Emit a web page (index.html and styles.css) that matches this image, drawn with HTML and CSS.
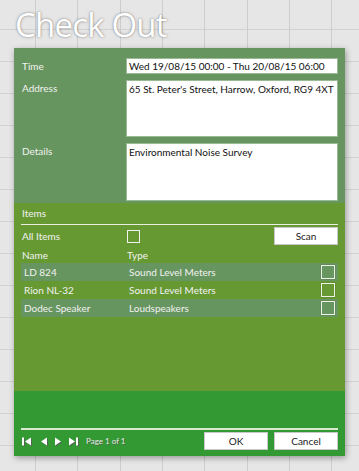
FILE: index.html
```html
<!DOCTYPE html>
<html>
<head>
<meta charset="utf-8">
<link rel="stylesheet" href="styles.css">
</head>
<body>
<div class="page">
  <h1 class="title">Check Out</h1>
  <div class="dialog">
    <div class="form">
      <div class="frow">
        <label class="flabel">Time</label>
        <div class="field single">Wed 19/08/15 00:00 - Thu 20/08/15 06:00</div>
      </div>
      <div class="frow">
        <label class="flabel">Address</label>
        <div class="field multi addr">65 St. Peter's Street, Harrow, Oxford, RG9 4XT</div>
      </div>
      <div class="frow">
        <label class="flabel">Details</label>
        <div class="field multi det">Environmental Noise Survey</div>
      </div>
    </div>
    <div class="items">
      <div class="items-head">Items</div>
      <div class="allrow">
        <span class="alllabel">All Items</span>
        <span class="cb head-cb"></span>
        <button class="btn scan">Scan</button>
      </div>
      <div class="colhead">
        <span class="cname">Name</span>
        <span class="ctype">Type</span>
      </div>
      <div class="row alt"><span class="cname">LD 824</span><span class="ctype">Sound Level Meters</span><span class="cb row-cb"></span></div>
      <div class="row"><span class="cname">Rion NL-32</span><span class="ctype">Sound Level Meters</span><span class="cb row-cb"></span></div>
      <div class="row alt"><span class="cname">Dodec Speaker</span><span class="ctype">Loudspeakers</span><span class="cb row-cb"></span></div>
    </div>
    <div class="footer">
      <div class="footbar">
        <div class="nav">
          <svg width="9" height="9" viewBox="0 0 9 9" class="ico"><rect x="0" y="0.5" width="2" height="8" fill="#fff"/><polygon points="9,0.5 3,4.5 9,8.5" fill="#fff"/></svg>
          <svg width="6" height="9" viewBox="0 0 6 9" class="ico"><polygon points="6,0.5 0,4.5 6,8.5" fill="#fff"/></svg>
          <svg width="6" height="9" viewBox="0 0 6 9" class="ico"><polygon points="0,0.5 6,4.5 0,8.5" fill="#fff"/></svg>
          <svg width="9" height="9" viewBox="0 0 9 9" class="ico"><polygon points="0,0.5 6,4.5 0,8.5" fill="#fff"/><rect x="7" y="0.5" width="2" height="8" fill="#fff"/></svg>
          <span class="pageinfo">Page 1 of 1</span>
        </div>
        <div class="actions">
          <button class="btn">OK</button>
          <button class="btn">Cancel</button>
        </div>
      </div>
    </div>
  </div>
</div>
</body>
</html>
```

FILE: styles.css
```css
html, body {
  margin: 0;
  padding: 0;
}
body {
  width: 359px;
  height: 471px;
  overflow: hidden;
  font-family: Lato, "Open Sans", sans-serif;
  background-color: #e6e6e6;
  background-image:
    repeating-linear-gradient(to right, transparent 0, transparent 35px, #cdcdcd 35px, #cdcdcd 36px, transparent 36px, transparent 42.3px),
    repeating-linear-gradient(to bottom, transparent 0, transparent 29px, #d2d2d2 29px, #d2d2d2 30px, transparent 30px, transparent 32px);
}
.page {
  display: flex;
  flex-direction: column;
}
.title {
  margin: 0;
  height: 48px;
  padding-left: 15px;
  font-family: "Open Sans", sans-serif;
  font-weight: 400;
  font-size: 33px;
  line-height: 50px;
  color: #ffffff;
  text-shadow: 0 0 3px rgba(0,0,0,0.35), 0 0 1px rgba(0,0,0,0.3);
  letter-spacing: -0.8px;
}
.dialog {
  margin-left: 14px;
  width: 331px;
  height: 408px;
  display: flex;
  flex-direction: column;
  box-shadow: 1px 2px 6px rgba(0,0,0,0.35);
  font-size: 10px;
  color: #f2f2f2;
}
.form {
  background: #67955f;
  padding: 10px 7px 2px 8px;
  display: flex;
  flex-direction: column;
  gap: 6px;
  height: 155px;
  box-sizing: border-box;
}
.frow {
  display: flex;
}
.flabel {
  width: 104px;
  line-height: 16px;
}
.field {
  flex: 1;
  background: #fff;
  color: #111;
  border: 1px solid #9aba94;
  box-sizing: border-box;
  padding: 0 2px;
  line-height: 14px;
}
.single { height: 16px; }
.addr { height: 57px; padding-top: 1px; }
.det { height: 58px; padding-top: 1px; }
.items {
  background: #679933;
  height: 188px;
  padding: 0 7px 0 7px;
  box-sizing: border-box;
  display: flex;
  flex-direction: column;
}
.items-head {
  height: 21px;
  line-height: 21px;
  border-bottom: 1px solid #e8eee0;
  padding-left: 1px;
}
.allrow {
  display: flex;
  align-items: center;
  height: 18px;
  margin-top: 2px;
}
.alllabel {
  width: 105px;
  padding-left: 1px;
}
.cb {
  display: inline-block;
  width: 11px;
  height: 11px;
  border: 1px solid #f2f2f2;
  box-sizing: content-box;
}
.btn {
  font-family: Lato, "Open Sans", sans-serif;
  font-size: 10px;
  color: #222;
  background: #fff;
  border: 1px solid #c8c8c8;
  padding: 0;
  height: 18px;
  width: 64px;
  line-height: 15px;
}
.scan {
  margin-left: auto;
}
.colhead {
  display: flex;
  height: 18px;
  line-height: 20px;
  padding-left: 1px;
}
.colhead .cname { width: 105px; }
.row {
  display: flex;
  align-items: center;
  height: 18px;
  padding-left: 3px;
}
.row.alt { background: #67955f; }
.row .cname { width: 105px; }
.row .ctype { flex: 1; }
.row-cb {
  width: 12px;
  height: 12px;
  border: 1px solid #eef2ea;
  margin-right: 3px;
  box-shadow: 0 0 1px rgba(0,0,0,0.4);
}
.footer {
  background: #339933;
  flex: 1;
  padding: 0 7px 6px 7px;
  display: flex;
  flex-direction: column;
  justify-content: flex-end;
}
.footbar {
  border-top: 2px solid #d8ead0;
  padding-top: 2px;
  display: flex;
  align-items: center;
}
.nav {
  display: flex;
  align-items: center;
  gap: 5px;
  padding-left: 1px;
}
.ico { filter: drop-shadow(1px 1px 0 rgba(90,90,90,0.8)); }
.nav .ico:nth-child(2) { margin-left: 5px; }
.nav .ico:nth-child(3) { margin-left: 3px; }
.nav .ico:nth-child(4) { margin-left: 3px; }
.pageinfo {
  font-size: 8px;
  color: #e8e8e8;
  margin-left: 3px;
  text-shadow: 1px 1px 0 rgba(80,80,80,0.6);
}
.actions {
  margin-left: auto;
  display: flex;
  gap: 6px;
}
```
